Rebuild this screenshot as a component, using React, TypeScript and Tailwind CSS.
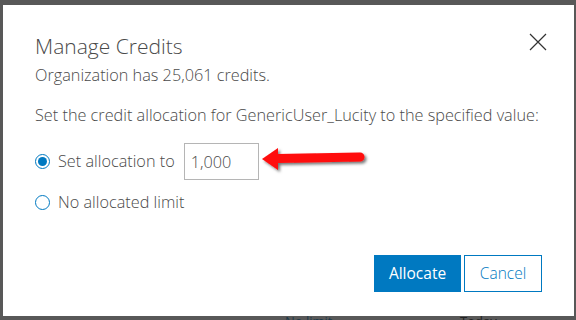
import { useState } from 'react';

const FONT = { fontFamily: '"Open Sans", "Lato", sans-serif' };

function Radio({ checked }: { checked: boolean }) {
  return (
    <span className="w-[15px] h-[15px] rounded-full border border-[#0079c1] bg-white grid place-items-center shrink-0">
      {checked && <span className="w-[9px] h-[9px] rounded-full bg-[#0079c1]" />}
    </span>
  );
}

function RedArrow() {
  return (
    <svg width="112" height="32" viewBox="0 0 112 32" className="shrink-0">
      <defs>
        <filter id="sh" x="-10%" y="-30%" width="130%" height="180%">
          <feDropShadow dx="2" dy="2" stdDeviation="1.5" floodColor="#000" floodOpacity="0.55" />
        </filter>
      </defs>
      <g filter="url(#sh)">
        <path d="M2 15 L18 4 L18 10 L100 8.5 A4.5 4.5 0 0 1 100 17.5 L18 19 L18 26 Z" fill="#ff0a0a" />
      </g>
    </svg>
  );
}

export default function App() {
  const [choice, setChoice] = useState<'set' | 'none'>('set');

  return (
    <div className="w-[576px] h-[320px] bg-[#585858] overflow-hidden pt-[5px] pl-[3px]" style={FONT}>
      <div className="w-[571px] h-[311px] bg-white relative px-[32px] pt-[26px] flex flex-col text-[#4a4a4a]">
        <button className="absolute right-[27px] top-[28px] w-[18px] h-[18px]" aria-label="Close">
          <svg viewBox="0 0 18 18" width="18" height="18">
            <path d="M1 1 L17 17 M17 1 L1 17" stroke="#333" strokeWidth="1.2" fill="none" />
          </svg>
        </button>

        <h2 className="text-[21px] leading-[30px] font-light">Manage Credits</h2>
        <p className="text-[16.25px] leading-[20px] mt-[4px] font-light">Organization has 25,061 credits.</p>
        <p className="text-[16.25px] leading-[20px] mt-[20px] font-light">
          Set the credit allocation for GenericUser_Lucity to the specified value:
        </p>

        <div className="mt-[18px] flex items-center">
          <label className="flex items-center gap-[8px] cursor-pointer" onClick={() => setChoice('set')}>
            <Radio checked={choice === 'set'} />
            <span className="text-[16.25px] font-light">Set allocation to</span>
          </label>
          <input
            defaultValue="1,000"
            className="ml-[9px] w-[75px] h-[37px] border border-[#b5b5b5] px-[6px] text-[16.25px] font-light text-[#4a4a4a] outline-none"
            style={FONT}
          />
          <span className="ml-[1px] mt-[-4px]">
            <RedArrow />
          </span>
        </div>

        <label className="mt-[10px] flex items-center gap-[8px] cursor-pointer" onClick={() => setChoice('none')}>
          <Radio checked={choice === 'none'} />
          <span className="text-[16.25px] font-light">No allocated limit</span>
        </label>

        <div className="mt-auto mb-[24px] flex justify-end gap-[3px]">
          <button className="w-[87px] h-[37px] bg-[#0079c1] text-white text-[15.5px]">Allocate</button>
          <button className="w-[78px] h-[37px] border border-[#0079c1] text-[#0079c1] text-[15.5px] font-light bg-white">
            Cancel
          </button>
        </div>
      </div>
      <div className="relative h-[10px]">
        <span className="absolute left-[282px] top-[-1px] text-[13px] leading-[13px] text-[#1e3a4a]">No limit</span>
        <span className="absolute left-[457px] top-[-1px] text-[13px] leading-[13px] text-[#222]">Today</span>
      </div>
    </div>
  );
}
